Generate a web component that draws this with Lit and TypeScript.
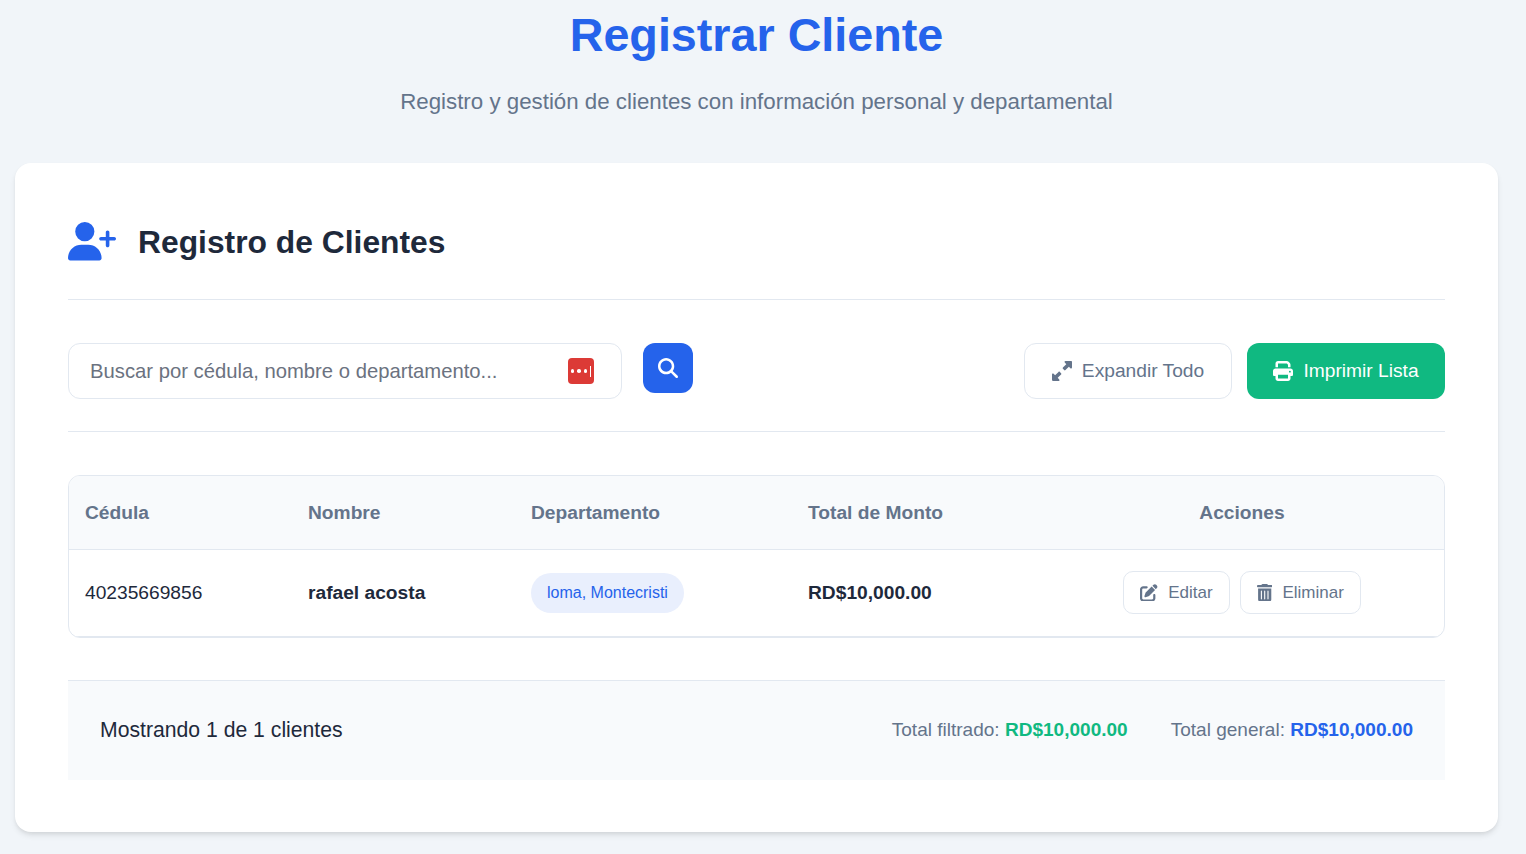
import { LitElement, html, css, svg } from "lit";
import { customElement } from "lit/decorators.js";

const icon = (vb: string, d: string, cls: string) =>
  html`<svg class=${cls} viewBox=${vb} aria-hidden="true">${svg`<path fill="currentColor" d=${d}></path>`}</svg>`;

const I = {
  userPlus: "M96 128a128 128 0 1 1 256 0A128 128 0 1 1 96 128zM0 482.3C0 383.8 79.8 304 178.3 304h91.4C368.2 304 448 383.8 448 482.3c0 16.4-13.3 29.7-29.7 29.7H29.7C13.3 512 0 498.7 0 482.3zM504 312V248H440c-13.3 0-24-10.7-24-24s10.7-24 24-24h64V136c0-13.3 10.7-24 24-24s24 10.7 24 24v64h64c13.3 0 24 10.7 24 24s-10.7 24-24 24H552v64c0 13.3-10.7 24-24 24s-24-10.7-24-24z",
  search: "M416 208c0 45.9-14.9 88.3-40 122.7L502.6 457.4c12.5 12.5 12.5 32.8 0 45.3s-32.8 12.5-45.3 0L330.7 376c-34.4 25.2-76.8 40-122.7 40C93.1 416 0 322.9 0 208S93.1 0 208 0S416 93.1 416 208zM208 352a144 144 0 1 0 0-288 144 144 0 1 0 0 288z",
  expand: "M344 0H488c13.3 0 24 10.7 24 24V168c0 9.7-5.8 18.5-14.8 22.2s-19.3 1.7-26.2-5.2l-39-39-87 87c-9.4 9.4-24.6 9.4-33.9 0l-32-32c-9.4-9.4-9.4-24.6 0-33.9l87-87L327 41c-6.9-6.9-8.9-17.2-5.2-26.2S334.3 0 344 0zM168 512H24c-13.3 0-24-10.7-24-24V344c0-9.7 5.8-18.5 14.8-22.2s19.3-1.7 26.2 5.2l39 39 87-87c9.4-9.4 24.6-9.4 33.9 0l32 32c9.4 9.4 9.4 24.6 0 33.9l-87 87 39 39c6.9 6.9 8.9 17.2 5.2 26.2s-12.5 14.8-22.2 14.8z",
  print: "M128 0C92.7 0 64 28.7 64 64v96h64V64H354.7L384 93.3V160h64V93.3c0-17-6.7-33.3-18.7-45.3L400 18.7C388 6.7 371.7 0 354.7 0H128zM384 352v32 64H128V384 368 352H384zm64 32h32c17.7 0 32-14.3 32-32V256c0-35.3-28.7-64-64-64H64c-35.3 0-64 28.7-64 64v96c0 17.7 14.3 32 32 32H64v64c0 35.3 28.7 64 64 64H384c35.3 0 64-28.7 64-64V384zM432 248a24 24 0 1 1 0 48 24 24 0 1 1 0-48z",
  edit: "M471.6 21.7c-21.9-21.9-57.3-21.9-79.2 0L362.3 51.7l97.9 97.9 30.1-30.1c21.9-21.9 21.9-57.3 0-79.2L471.6 21.7zm-299.2 220c-6.1 6.1-10.8 13.6-13.5 21.9l-29.6 88.8c-2.9 8.6-.6 18.1 5.8 24.6s15.9 8.7 24.6 5.8l88.8-29.6c8.2-2.7 15.7-7.4 21.9-13.5L437.7 172.3 339.7 74.3 172.4 241.7zM96 64C43 64 0 107 0 160V416c0 53 43 96 96 96H352c53 0 96-43 96-96V320c0-17.7-14.3-32-32-32s-32 14.3-32 32v96c0 17.7-14.3 32-32 32H96c-17.7 0-32-14.3-32-32V160c0-17.7 14.3-32 32-32h96c17.7 0 32-14.3 32-32s-14.3-32-32-32H96z",
  trash: "M135.2 17.7C140.6 6.8 151.7 0 163.8 0H284.2c12.1 0 23.2 6.8 28.6 17.7L320 32h96c17.7 0 32 14.3 32 32s-14.3 32-32 32H32C14.3 96 0 81.7 0 64S14.3 32 32 32h96l7.2-14.3zM32 128H416V448c0 35.3-28.7 64-64 64H96c-35.3 0-64-28.7-64-64V128zm96 64c-8.8 0-16 7.2-16 16V432c0 8.8 7.2 16 16 16s16-7.2 16-16V208c0-8.8-7.2-16-16-16zm96 0c-8.8 0-16 7.2-16 16V432c0 8.8 7.2 16 16 16s16-7.2 16-16V208c0-8.8-7.2-16-16-16zm96 0c-8.8 0-16 7.2-16 16V432c0 8.8 7.2 16 16 16s16-7.2 16-16V208c0-8.8-7.2-16-16-16z",
};

@customElement("app-root")
export class AppRoot extends LitElement {
  static styles = css`
    :host {
      display: block;
      height: 854px;
      overflow: hidden;
      box-sizing: border-box;
      background: #f1f5f9;
      padding: 0 28px 0 15px;
      font-family: "Liberation Sans", Arial, sans-serif;
      color: #1e293b;
    }
    .page-head { text-align: center; height: 163px; }
    h1 {
      margin: 0;
      padding-top: 7px;
      font-size: 46.7px;
      line-height: 56px;
      font-weight: 700;
      color: #2563eb;
    }
    .sub { margin: 26px 0 0; font-size: 22.3px; line-height: 26px; color: #64748b; }
    .card {
      box-sizing: border-box;
      height: 669px;
      background: #fff;
      border-radius: 16px;
      padding: 53px;
      box-shadow: 0 4px 6px -1px rgba(0,0,0,.1), 0 2px 4px -1px rgba(0,0,0,.06);
    }
    .card-head {
      display: flex;
      align-items: center;
      gap: 22px;
      height: 84px;
      box-sizing: border-box;
      padding-bottom: 32px;
      border-bottom: 1px solid #e2e8f0;
    }
    .i-user { width: 48px; height: 38.4px; color: #2563eb; flex: none; }
    h2 { margin: 0; font-size: 31.8px; line-height: 38px; font-weight: 700; color: #1e293b; }
    .toolbar {
      display: flex;
      justify-content: space-between;
      align-items: flex-start;
      height: 89px;
      margin-top: 43px;
      box-sizing: border-box;
      border-bottom: 1px solid #e2e8f0;
    }
    .search { display: flex; gap: 21px; align-items: flex-start; }
    .input {
      position: relative;
      width: 554px;
      height: 56px;
      box-sizing: border-box;
      border: 1px solid #e2e8f0;
      border-radius: 12px;
      display: flex;
      align-items: center;
      padding-left: 21px;
      font-size: 20.25px;
      color: #6b7280;
    }
    .lp {
      position: absolute;
      right: 27px;
      top: 14px;
      width: 26px;
      height: 26px;
      border-radius: 4px;
      background: #dc3a36;
      display: flex;
      align-items: center;
      justify-content: center;
      gap: 3px;
    }
    .lp i { width: 3.6px; height: 3.6px; border-radius: 50%; background: #fff; }
    .lp b { width: 1px; height: 11px; background: #fff; }
    .btn-search {
      width: 50px;
      height: 50px;
      border-radius: 12px;
      background: #2563eb;
      color: #fff;
      display: flex;
      align-items: center;
      justify-content: center;
    }
    .i-search { width: 20px; height: 20px; }
    .actions { display: flex; gap: 15px; }
    .btn {
      height: 56px;
      box-sizing: border-box;
      border-radius: 12px;
      display: flex;
      align-items: center;
      justify-content: center;
      gap: 10px;
      font-size: 19.2px;
    }
    .btn.light { width: 208px; border: 1px solid #e2e8f0; background: #fff; color: #64748b; }
    .btn.green { width: 198px; background: #10b981; color: #fff; }
    .i-btn { width: 20px; height: 20px; flex: none; }
    .table {
      margin-top: 43px;
      border: 1px solid #e2e8f0;
      border-radius: 12px;
      overflow: hidden;
    }
    .row {
      display: grid;
      grid-template-columns: 223px 223px 277px 232px 1fr;
      align-items: center;
      padding-left: 16px;
      box-sizing: border-box;
      border-bottom: 1px solid #e2e8f0;
    }
    .row.head {
      height: 74px;
      background: #f8fafc;
      font-size: 19.2px;
      font-weight: 700;
      color: #64748b;
    }
    .row.body { height: 87px; padding-bottom: 1px; font-size: 19.2px; color: #1e293b; }
    .center { text-align: center; }
    .strong { font-weight: 700; }
    .pill {
      justify-self: start;
      height: 40px;
      display: flex;
      align-items: center;
      padding: 0 16px;
      border-radius: 20px;
      background: #e9effd;
      color: #2563eb;
      font-size: 16px;
    }
    .row-actions { display: flex; justify-content: center; gap: 10px; }
    .mini {
      height: 43px;
      box-sizing: border-box;
      border: 1px solid #e2e8f0;
      border-radius: 10px;
      display: flex;
      align-items: center;
      gap: 10.4px;
      padding: 0 16px;
      font-size: 17px;
      color: #64748b;
    }
    .i-mini { height: 17.6px; width: 17.6px; flex: none; }
    .i-trash { height: 17.6px; width: 15.4px; flex: none; }
    .foot {
      margin-top: 42px;
      height: 100px;
      box-sizing: border-box;
      background: #f8fafc;
      border-top: 1px solid #e2e8f0;
      display: flex;
      align-items: center;
      justify-content: space-between;
      padding: 0 32px 2px;
    }
    .count { font-size: 21.2px; color: #1e293b; }
    .totals { display: flex; gap: 43px; font-size: 19.05px; color: #64748b; }
    .g { color: #10b981; font-weight: 700; }
    .b { color: #2563eb; font-weight: 700; }
  `;

  render() {
    return html`
      <header class="page-head">
        <h1>Registrar Cliente</h1>
        <p class="sub">Registro y gestión de clientes con información personal y departamental</p>
      </header>
      <main class="card">
        <div class="card-head">
          ${icon("0 0 640 512", I.userPlus, "i-user")}
          <h2>Registro de Clientes</h2>
        </div>
        <div class="toolbar">
          <div class="search">
            <div class="input">
              Buscar por cédula, nombre o departamento...
              <span class="lp"><i></i><i></i><i></i><b></b></span>
            </div>
            <div class="btn-search">${icon("0 0 512 512", I.search, "i-search")}</div>
          </div>
          <div class="actions">
            <div class="btn light">${icon("0 0 512 512", I.expand, "i-btn")}Expandir Todo</div>
            <div class="btn green">${icon("0 0 512 512", I.print, "i-btn")}Imprimir Lista</div>
          </div>
        </div>
        <div class="table">
          <div class="row head">
            <div>Cédula</div><div>Nombre</div><div>Departamento</div><div>Total de Monto</div>
            <div class="center">Acciones</div>
          </div>
          <div class="row body">
            <div>40235669856</div>
            <div class="strong">rafael acosta</div>
            <div class="pill">loma, Montecristi</div>
            <div class="strong">RD$10,000.00</div>
            <div class="row-actions">
              <div class="mini">${icon("0 0 512 512", I.edit, "i-mini")}Editar</div>
              <div class="mini">${icon("0 0 448 512", I.trash, "i-trash")}Eliminar</div>
            </div>
          </div>
        </div>
        <div class="foot">
          <div class="count">Mostrando 1 de 1 clientes</div>
          <div class="totals">
            <div>Total filtrado: <span class="g">RD$10,000.00</span></div>
            <div>Total general: <span class="b">RD$10,000.00</span></div>
          </div>
        </div>
      </main>
    `;
  }
}
